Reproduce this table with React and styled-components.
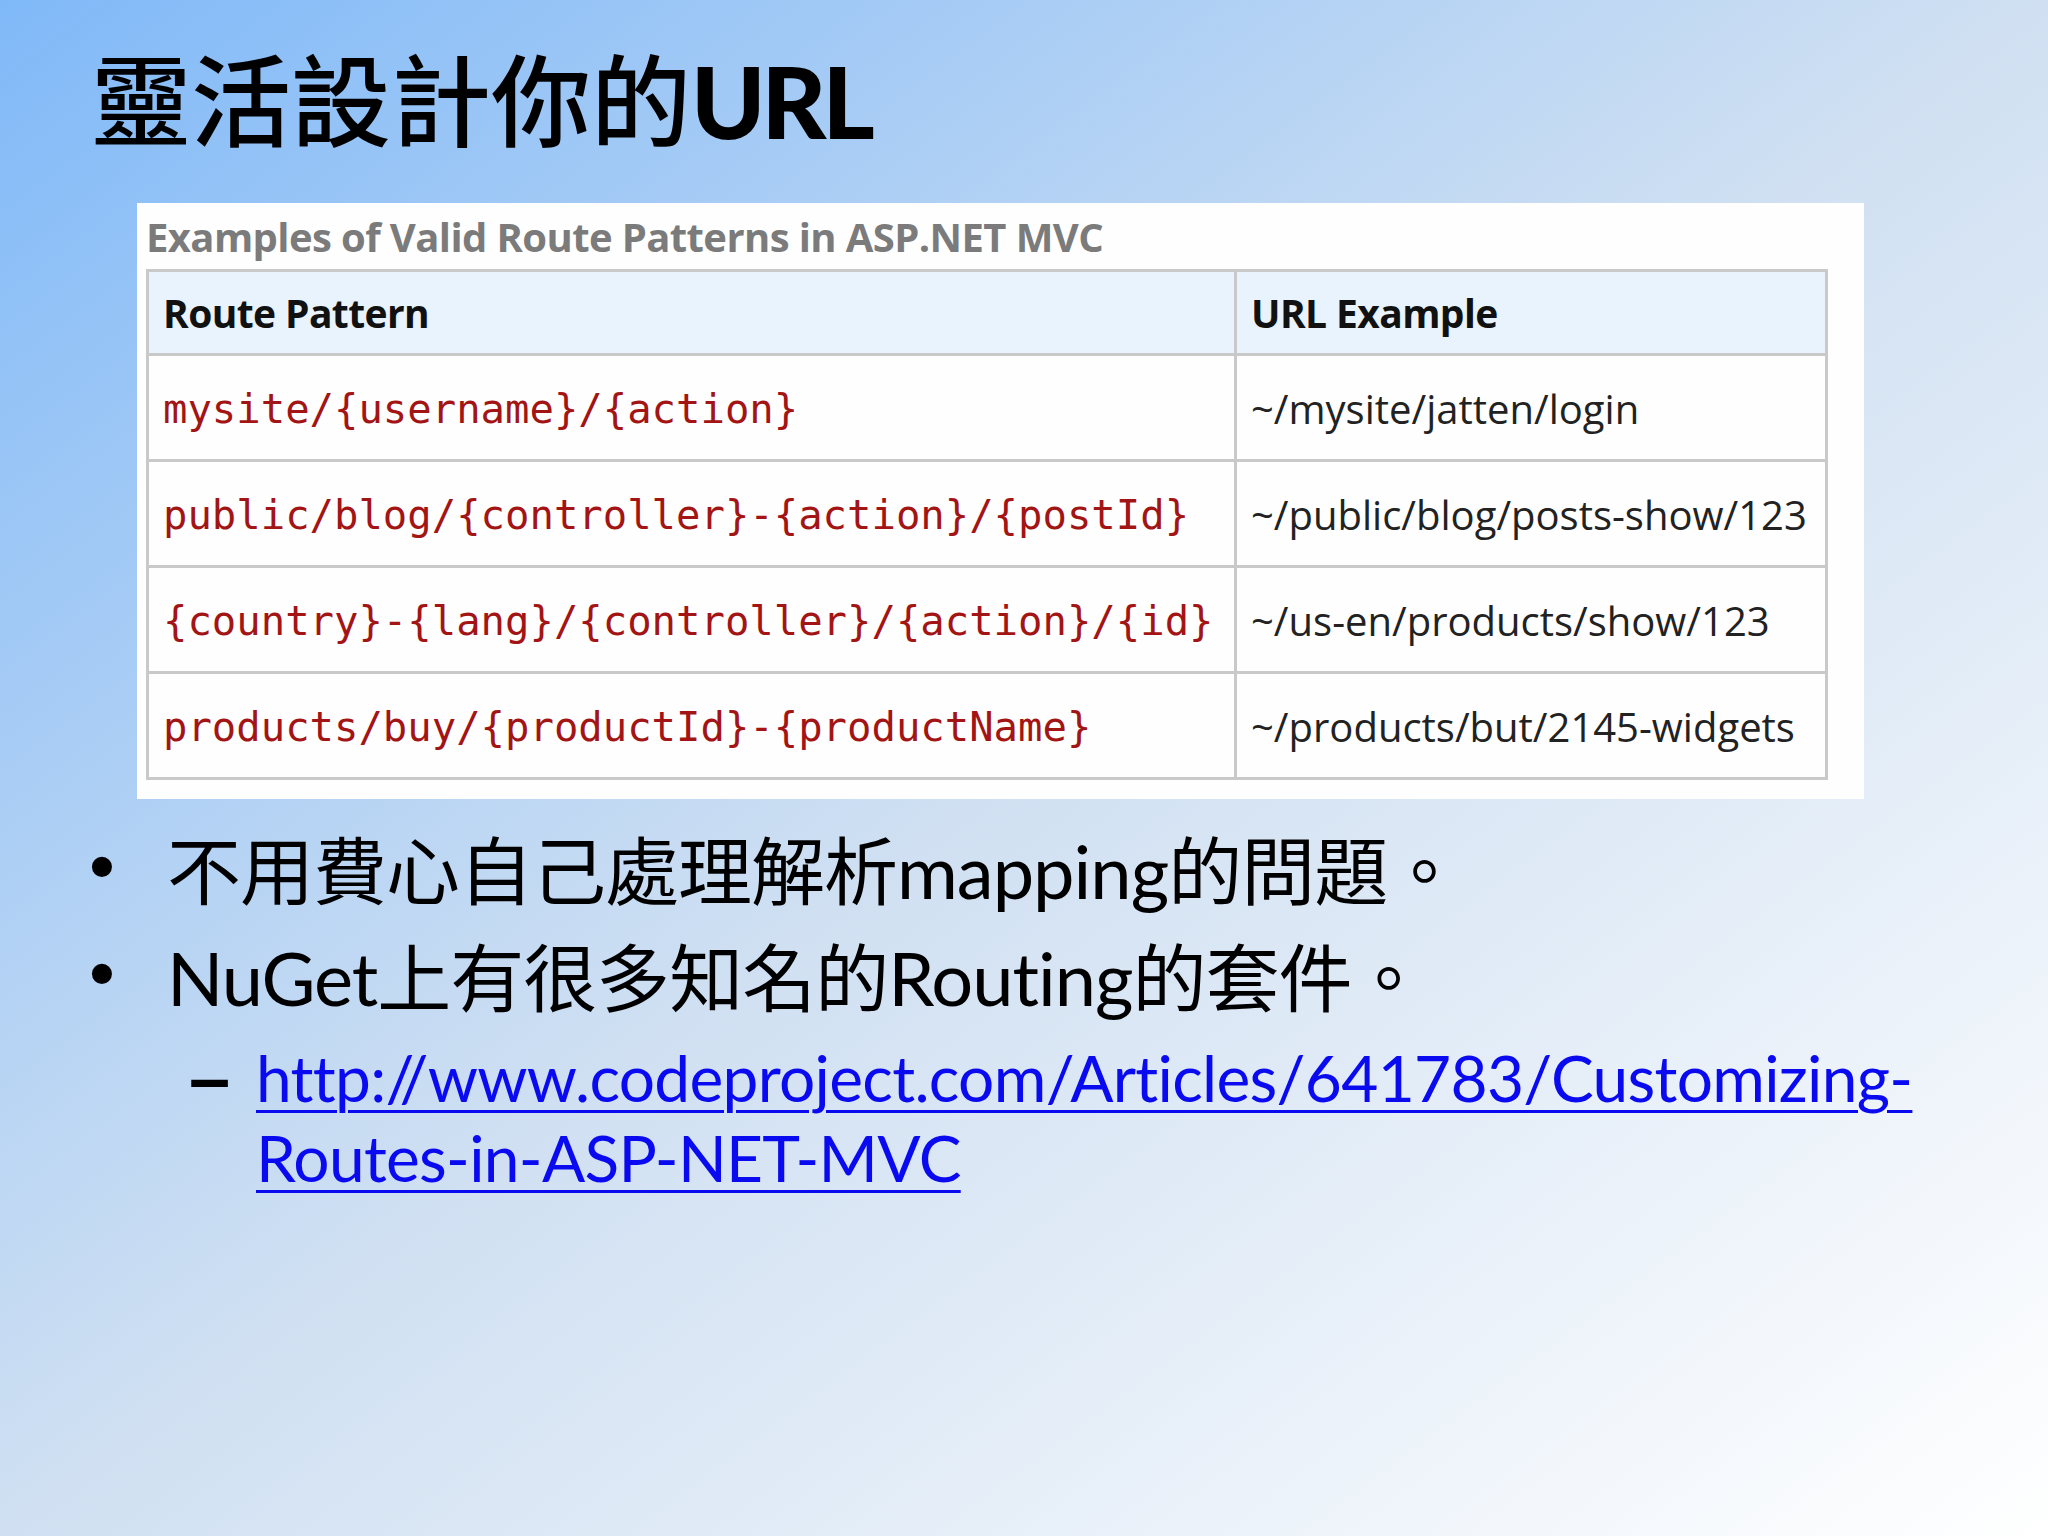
import styled, { createGlobalStyle } from "styled-components";

const GlobalStyle = createGlobalStyle`
  html, body {
    margin: 0;
    padding: 0;
  }
  body {
    font-family: Lato, "Noto Sans CJK TC", sans-serif;
  }
`;

const routes = [
  ["mysite/{username}/{action}", "~/mysite/jatten/login"],
  ["public/blog/{controller}-{action}/{postId}", "~/public/blog/posts-show/123"],
  ["{country}-{lang}/{controller}/{action}/{id}", "~/us-en/products/show/123"],
  ["products/buy/{productId}-{productName}", "~/products/but/2145-widgets"],
];

const Slide = styled.div`
  width: 2048px;
  height: 1536px;
  box-sizing: border-box;
  padding: 36px 0 0 91px;
  display: flex;
  flex-direction: column;
  align-items: flex-start;
  background: linear-gradient(to bottom right, #80b9f8 0%, #d0e0f2 50%, #ffffff 100%);
  overflow: hidden;
`;

const Title = styled.h1`
  margin: 0;
  font-family: "Noto Sans CJK TC", sans-serif;
  font-weight: 500;
  font-size: 100px;
  line-height: 120px;
  color: #000;

  span {
    font-family: Lato, sans-serif;
    font-weight: 900;
    letter-spacing: -4px;
  }
`;

const Panel = styled.div`
  margin: 43px 0 0 46px;
  width: 1727px;
  box-sizing: border-box;
  padding: 0 39px 19px 9px;
  background: #fefefe;
`;

const Caption = styled.div`
  height: 66px;
  display: flex;
  align-items: center;
  font-family: "Open Sans", sans-serif;
  font-weight: 700;
  font-size: 40px;
  letter-spacing: -0.6px;
  color: #7b7b7b;
`;

const RouteTable = styled.table`
  width: 1679px;
  border-collapse: collapse;
  table-layout: fixed;
`;

const HeadCell = styled.th`
  height: 84px;
  box-sizing: border-box;
  padding: 0 0 0 14px;
  text-align: left;
  background: #e9f3fd;
  border: 3px solid #c9c9c9;
  font-family: "Open Sans", sans-serif;
  font-weight: 700;
  font-size: 39px;
  letter-spacing: -0.6px;
  color: #111;
`;

const Cell = styled.td`
  height: 106px;
  box-sizing: border-box;
  padding: 2px 0 0 14px;
  border: 3px solid #c9c9c9;
  background: #fefefe;
  white-space: nowrap;
  font-family: ${(p) =>
    p.$mono ? '"DejaVu Sans Mono", monospace' : '"Open Sans", sans-serif'};
  font-size: ${(p) => (p.$mono ? "40.6px" : "40px")};
  color: ${(p) => (p.$mono ? "#a31515" : "#222")};
`;

const Bullets = styled.ul`
  list-style: none;
  margin: 14px 0 0 -2px;
  padding: 0;
`;

const Bullet = styled.li`
  display: flex;
  height: 107px;
  align-items: center;
  font-size: 74px;
  letter-spacing: -1px;
  color: #000;

  &::before {
    content: "•";
    width: 78px;
    flex-shrink: 0;
    font-family: "Liberation Sans", sans-serif;
  }
`;

const SubBullet = styled.li`
  display: flex;
  align-items: flex-start;
  margin: 11px 0 0 100px;
  font-size: 64px;
  line-height: 80px;

  &::before {
    content: "–";
    width: 67px;
    flex-shrink: 0;
    font-family: "Liberation Sans", sans-serif;
    font-weight: 700;
    font-size: 74px;
    color: #000;
  }
`;

const Link = styled.a`
  color: #0a0af0;
  text-decoration: underline;
  text-decoration-thickness: 3px;
  text-underline-offset: 8px;
  letter-spacing: -0.7px;
`;

export default function App() {
  return (
    <>
      <GlobalStyle />
      <Slide>
        <Title>
          靈活設計你的<span>URL</span>
        </Title>
        <Panel>
          <Caption>Examples of Valid Route Patterns in ASP.NET MVC</Caption>
          <RouteTable>
            <colgroup>
              <col style={{ width: "1088px" }} />
              <col style={{ width: "591px" }} />
            </colgroup>
            <thead>
              <tr>
                <HeadCell>Route Pattern</HeadCell>
                <HeadCell>URL Example</HeadCell>
              </tr>
            </thead>
            <tbody>
              {routes.map(([pattern, example]) => (
                <tr key={pattern}>
                  <Cell $mono>{pattern}</Cell>
                  <Cell>{example}</Cell>
                </tr>
              ))}
            </tbody>
          </RouteTable>
        </Panel>
        <Bullets>
          <Bullet>不用費心自己處理解析mapping的問題。</Bullet>
          <Bullet>NuGet上有很多知名的Routing的套件。</Bullet>
          <SubBullet>
            <Link href="#">
              http://www.codeproject.com/Articles/641783/Customizing-
              <br />
              Routes-in-ASP-NET-MVC
            </Link>
          </SubBullet>
        </Bullets>
      </Slide>
    </>
  );
}
